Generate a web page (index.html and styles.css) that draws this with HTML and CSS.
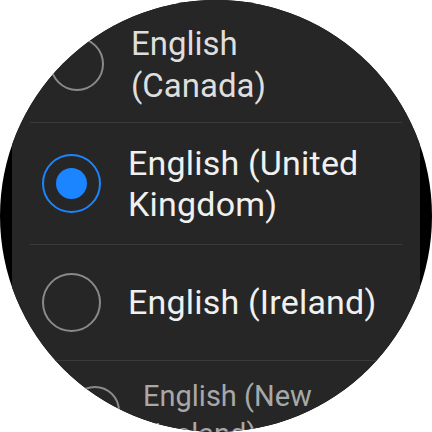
FILE: index.html
```html
<!DOCTYPE html>
<html>
<head>
<meta charset="utf-8">
<link rel="stylesheet" href="styles.css">
</head>
<body>
<div class="watch">
  <div class="list">
    <div class="item item-top">
      <span class="radio"></span>
      <span class="label">English<br>(Canada)</span>
    </div>
    <div class="divider"></div>
    <div class="item item-sel">
      <span class="radio radio-on"></span>
      <span class="label">English (United<br>Kingdom)</span>
    </div>
    <div class="divider"></div>
    <div class="item item-mid">
      <span class="radio"></span>
      <span class="label">English (Ireland)</span>
    </div>
    <div class="divider"></div>
    <div class="item item-bottom">
      <span class="radio"></span>
      <span class="label">English (New<br>Zealand)</span>
    </div>
  </div>
</div>
</body>
</html>
```

FILE: styles.css
```css
html, body {
  margin: 0;
  padding: 0;
  background: #ffffff;
}

.watch {
  width: 432px;
  height: 432px;
  border-radius: 50%;
  background: #000000;
  overflow: hidden;
}

.list {
  margin: 0 12px;
  height: 432px;
  background: #262626;
  display: flex;
  flex-direction: column;
  font-family: Roboto, "Noto Sans", sans-serif;
}

.divider {
  height: 1px;
  margin: 0 18px;
  background: #3a3a3a;
  flex-shrink: 0;
}

.item {
  display: flex;
  align-items: center;
  flex-shrink: 0;
  box-sizing: border-box;
}

.radio {
  flex-shrink: 0;
  box-sizing: border-box;
  border: 2px solid #8a8a8a;
  border-radius: 50%;
  display: flex;
  align-items: center;
  justify-content: center;
}

.radio-on {
  border-color: #1a85ff;
}

.radio-on::after {
  content: "";
  width: 31px;
  height: 31px;
  border-radius: 50%;
  background: #1a85ff;
}

.label {
  color: #f0f0f0;
  font-size: 34px;
  line-height: 41px;
  letter-spacing: 0.2px;
  white-space: nowrap;
}

.item-top {
  height: 122px;
  padding: 6px 0 0 38px;
}
.item-top .radio {
  width: 54px;
  height: 54px;
  margin-right: 27px;
}
.item-top .label {
  font-size: 33px;
  line-height: 42px;
  letter-spacing: 0;
  margin-top: 2px;
  color: #dedede;
}

.item-sel {
  height: 121px;
  padding-left: 30px;
}
.item-sel .radio {
  width: 59px;
  height: 59px;
  margin-right: 27px;
}

.item-mid {
  height: 115px;
  padding-left: 30px;
}
.item-mid .radio {
  width: 59px;
  height: 59px;
  margin-right: 27px;
}

.item-bottom {
  flex: 1;
  align-items: flex-start;
  padding: 16px 0 0 58px;
}
.item-bottom .radio {
  width: 50px;
  height: 50px;
  margin: 9px 23px 0 0;
}
.item-bottom .label {
  font-size: 29px;
  line-height: 38px;
  letter-spacing: 0;
  color: #a8a8a8;
}
```
